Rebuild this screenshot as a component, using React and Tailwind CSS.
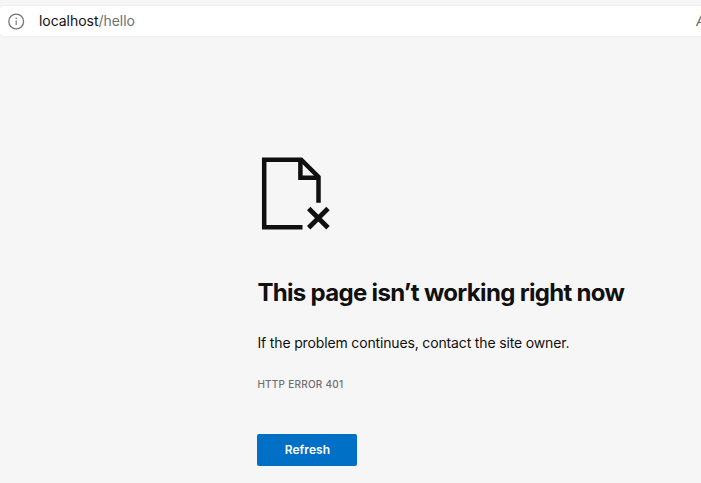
export default function App() {
  return (
    <div className="flex h-[483px] w-[701px] flex-col overflow-hidden bg-[#f6f6f6] font-['Inter',sans-serif] text-[#101010]">
      <header className="mt-[6px] flex h-[30px] shrink-0 items-center rounded-l-[4px] bg-white pl-[8px] shadow-[0_0_2px_rgba(0,0,0,0.1)]">
        <svg width="17" height="17" viewBox="0 0 17 17" fill="none" stroke="#767676">
          <circle cx="8.2" cy="8.5" r="7.4" strokeWidth="1.3" />
          <path d="M8.2 7.5v4.5" strokeWidth="1.2" />
          <circle cx="8.2" cy="5.2" r=".8" fill="#767676" stroke="none" />
        </svg>
        <div className="ml-[14px] text-[14px] leading-[20px] tracking-[-0.04px]">localhost<span className="text-[#717171]">/hello</span></div>
        <span className="ml-auto w-[5px] overflow-hidden text-[14px] italic leading-[20px] text-[#666]">A</span>
      </header>
      <main className="flex flex-col items-start pl-[257.4px] pt-[121px]">
        <svg className="ml-[3.6px]" width="70" height="74" viewBox="261 157 70 74" fill="none" stroke="#101010" strokeWidth="4.5">
          <path d="M302.500 227.300H264.200V159.700H301.200L318.500 177V202.700" />
          <path d="M300.400 159.700V177.700H318.500" />
          <path d="M308.700 208.500L328 227.800M328 208.500L308.700 227.800" strokeWidth="4.8" />
        </svg>
        <h1 className="mt-[46px] whitespace-nowrap text-[24px] font-bold leading-[32px] tracking-[-0.68px]">This page isn’t working right now</h1>
        <p className="mt-[24px] whitespace-nowrap text-[14px] leading-[20px] tracking-[-0.15px]">If the problem continues, contact the site owner.</p>
        <p className="mt-[24px] text-[10px] font-medium leading-[14px] tracking-[0.24px] text-[#707070]">HTTP ERROR 401</p>
        <button className="mt-[43px] h-[32px] w-[100px] rounded-[2px] bg-[#0070c6] text-[12px] font-semibold tracking-[0.08px] text-white">Refresh</button>
      </main>
    </div>
  );
}
